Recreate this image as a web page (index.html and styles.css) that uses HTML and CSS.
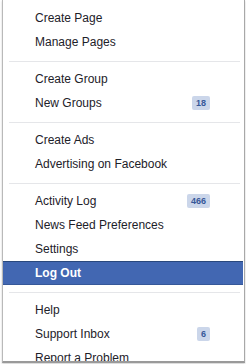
FILE: index.html
```html
<!DOCTYPE html>
<html>
<head>
<meta charset="utf-8">
<link rel="stylesheet" href="styles.css">
</head>
<body>
<div class="menu">
  <ul class="group first">
    <li class="item"><span>Create Page</span></li>
    <li class="item"><span>Manage Pages</span></li>
  </ul>
  <ul class="group">
    <li class="item"><span>Create Group</span></li>
    <li class="item"><span>New Groups</span><span class="badge">18</span></li>
  </ul>
  <ul class="group">
    <li class="item"><span>Create Ads</span></li>
    <li class="item"><span>Advertising on Facebook</span></li>
  </ul>
  <ul class="group">
    <li class="item"><span>Activity Log</span><span class="badge">466</span></li>
    <li class="item"><span>News Feed Preferences</span></li>
    <li class="item"><span>Settings</span></li>
    <li class="item active"><span>Log Out</span></li>
  </ul>
  <ul class="group">
    <li class="item"><span>Help</span></li>
    <li class="item"><span>Support Inbox</span><span class="badge">6</span></li>
    <li class="item"><span>Report a Problem</span></li>
  </ul>
</div>
</body>
</html>
```
FILE: styles.css
```css
html, body {
  margin: 0;
  padding: 0;
  background: #fff;
}
body {
  width: 246px;
  height: 364px;
  overflow: hidden;
  font-family: "Liberation Sans", Arial, sans-serif;
  font-size: 12px;
  color: #1d2129;
}
.menu {
  margin-left: 2px;
  width: 243px;
  height: 363px;
  border-left: 1px solid #b9b9b9;
  border-right: 1px solid #a8a8a8;
  border-bottom: 2px solid #9a9a9a;
  box-shadow: 0 1px 2px rgba(0,0,0,0.2);
  overflow: hidden;
  box-sizing: border-box;
  padding-top: 6px;
}
.group {
  list-style: none;
  margin: 0;
  padding: 0;
}
.group + .group {
  border-top: 1px solid #e5e6e9;
  margin: 7px 4px 0 6px;
  padding-top: 5px;
}
.item {
  height: 24px;
  display: flex;
  align-items: center;
  justify-content: space-between;
  padding: 0 34px 0 32px;
  white-space: nowrap;
}
.group + .group .item {
  margin-left: -6px;
  padding-left: 32px;
  padding-right: 30px;
}
.badge {
  background: #cbd6ea;
  color: #365899;
  font-size: 9px;
  font-weight: bold;
  line-height: 14px;
  height: 14px;
  padding: 0 4px;
  border-radius: 2px;
}
.group + .group .item.active {
  margin-left: -9px;
  margin-right: -3px;
  padding-left: 35px;
  background: #4267b2;
  border-top: 1px solid #29487d;
  border-bottom: 1px solid #365899;
  height: 24px;
  box-sizing: border-box;
  color: #fff;
  font-weight: bold;
}
```
